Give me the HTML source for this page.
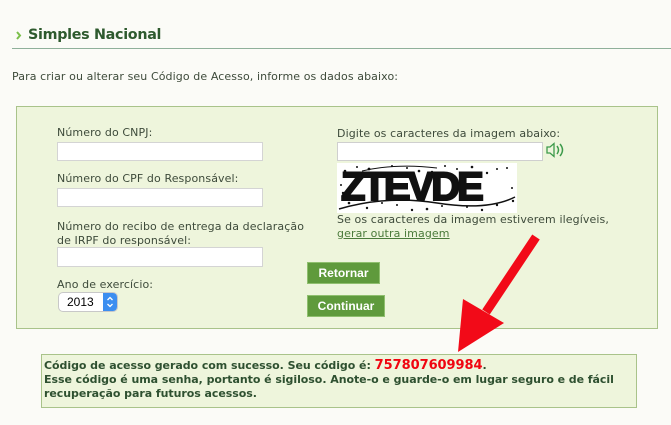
<!DOCTYPE html>
<html><head><meta charset="utf-8"><style>
body{margin:0;width:671px;height:425px;background:#fbfbf7;font-family:"DejaVu Sans",Verdana,sans-serif;position:relative;overflow:hidden;color:#3d4a3a}
.a{position:absolute;white-space:nowrap}
.t{font-size:11px;letter-spacing:0.1px}
.in{position:absolute;background:#fff;border:1px solid #d4d4d4;box-sizing:border-box}
.btn{position:absolute;background:#5f9a3c;border:1px solid #8fbf6e;color:#fff;font-family:"Liberation Sans",Arial,sans-serif;font-weight:bold;font-size:12px;text-align:center;box-sizing:border-box}
</style></head><body>
<svg class="a" style="left:16px;top:31px" width="6" height="9"><path d="M1 1 L4 4.5 L1 8" stroke="#7bbf4a" stroke-width="2" fill="none"/></svg>
<div class="a" style="left:28px;top:27px;font-size:14.3px;font-weight:bold;color:#2e5a2e;letter-spacing:-0.3px">Simples Nacional</div>
<div class="a" style="left:12px;top:48px;width:659px;height:1px;background:#8fb09a"></div>
<div class="a t" style="left:12px;top:70px;letter-spacing:0.1px">Para criar ou alterar seu Código de Acesso, informe os dados abaixo:</div>
<div class="a" style="left:16px;top:106px;width:642px;height:223px;background:#eef5dc;border:1px solid #a9c38a;box-sizing:border-box"></div>
<div class="a t" style="left:57px;top:126px">Número do CNPJ:</div>
<div class="in" style="left:57px;top:142px;width:206px;height:19px"></div>
<div class="a t" style="left:57px;top:172px">Número do CPF do Responsável:</div>
<div class="in" style="left:57px;top:188px;width:206px;height:19px"></div>
<div class="a t" style="left:57px;top:220px;line-height:14px">Número do recibo de entrega da declaração<br>de IRPF do responsável:</div>
<div class="in" style="left:57px;top:247px;width:206px;height:20px"></div>
<div class="a t" style="left:57px;top:278px">Ano de exercício:</div>
<div class="a" style="left:59px;top:293px;width:58px;height:18px;border-radius:4px;background:#fff;box-shadow:0 0 0 1px #c8c8c8;font-family:'Liberation Sans',Arial;font-size:12px;line-height:18px;padding-left:8px;box-sizing:border-box;color:#000">2013</div>
<div class="a" style="left:103px;top:293px;width:14px;height:18px;border-radius:0 4px 4px 0;background:#3c8ef0"></div>
<svg class="a" style="left:103px;top:293px" width="14" height="18"><path d="M4.5 7 L7 4.5 L9.5 7 M4.5 11 L7 13.5 L9.5 11" stroke="#fff" stroke-width="1.3" fill="none"/></svg>
<div class="a t" style="left:337px;top:127px">Digite os caracteres da imagem abaixo:</div>
<div class="in" style="left:337px;top:142px;width:206px;height:19px;border-color:#cfcfcf"></div>
<svg class="a" style="left:545px;top:142px" width="24" height="16"><path d="M2 5 H5 L9 1.5 V14.5 L5 11 H2 Z" stroke="#3c9a4a" stroke-width="1.3" fill="none"/><path d="M12 4 Q15 8 12 12 M15 2 Q20 8 15 14" stroke="#3c9a4a" stroke-width="1.5" fill="none"/></svg>
<div class="a" style="left:337px;top:163px;width:180px;height:50px;background:#fff;overflow:hidden">
<div style="position:absolute;left:4px;top:2px;font-family:'Liberation Sans',Arial;font-weight:900;font-size:40px;letter-spacing:-3px;color:#111;-webkit-text-stroke:2px #111">ZTEVDE</div>
<svg width="180" height="50" style="position:absolute;left:0;top:0"><g fill="#111"><circle cx="8" cy="8" r="1.3"/><circle cx="14" cy="14" r="1"/><circle cx="20" cy="4" r="1"/><circle cx="32" cy="6" r="1.4"/><circle cx="40" cy="10" r="1.2"/><circle cx="55" cy="3" r="1"/><circle cx="70" cy="5" r="1"/><circle cx="82" cy="8" r="1.3"/><circle cx="95" cy="9" r="1.2"/><circle cx="108" cy="3" r="1"/><circle cx="120" cy="6" r="1"/><circle cx="135" cy="4" r="1.3"/><circle cx="150" cy="10" r="1.2"/><circle cx="160" cy="6" r="1"/><circle cx="170" cy="5" r="1"/><circle cx="6" cy="30" r="1.2"/><circle cx="4" cy="22" r="1"/><circle cx="12" cy="40" r="1.3"/><circle cx="30" cy="45" r="1.2"/><circle cx="45" cy="40" r="1"/><circle cx="60" cy="42" r="1"/><circle cx="75" cy="47" r="1.2"/><circle cx="90" cy="46" r="1.3"/><circle cx="105" cy="43" r="1"/><circle cx="130" cy="44" r="1"/><circle cx="145" cy="47" r="1.2"/><circle cx="160" cy="42" r="1.2"/><circle cx="175" cy="25" r="1"/><circle cx="176" cy="38" r="1.2"/></g><path d="M2 46 Q50 32 100 40 T178 34" stroke="#111" stroke-width="1.5" fill="none"/><path d="M25 8 Q60 0 100 5" stroke="#111" stroke-width="1" fill="none"/></svg></div>
<div class="a t" style="left:337px;top:213px">Se os caracteres da imagem estiverem ilegíveis,</div>
<div class="a t" style="left:337px;top:227px;color:#4a7a3a;text-decoration:underline">gerar outra imagem</div>
<div class="btn" style="left:307px;top:262px;width:73px;height:22px;line-height:20px">Retornar</div>
<div class="btn" style="left:307px;top:295px;width:78px;height:22px;line-height:20px">Continuar</div>
<div class="a" style="left:41px;top:354px;width:596px;height:54px;background:#eef5dc;border:1px solid #a9c38a;box-sizing:border-box"></div>
<div class="a" style="left:44px;top:359px;font-size:11px;font-weight:bold;line-height:14px;color:#2e5030;letter-spacing:-0.05px">Código de acesso gerado com sucesso. Seu código é: <span style="color:#f00510;font-size:13px">757807609984</span>.<br>Esse código é uma senha, portanto é sigiloso. Anote-o e guarde-o em lugar seguro e de fácil<br>recuperação para futuros acessos.</div>
<svg class="a" style="left:0;top:0" width="671" height="425"><line x1="536" y1="237" x2="486" y2="312" stroke="#f20a18" stroke-width="9"/><polygon points="463,299 504,323 458,352" fill="#f20a18"/></svg>
</body></html>
